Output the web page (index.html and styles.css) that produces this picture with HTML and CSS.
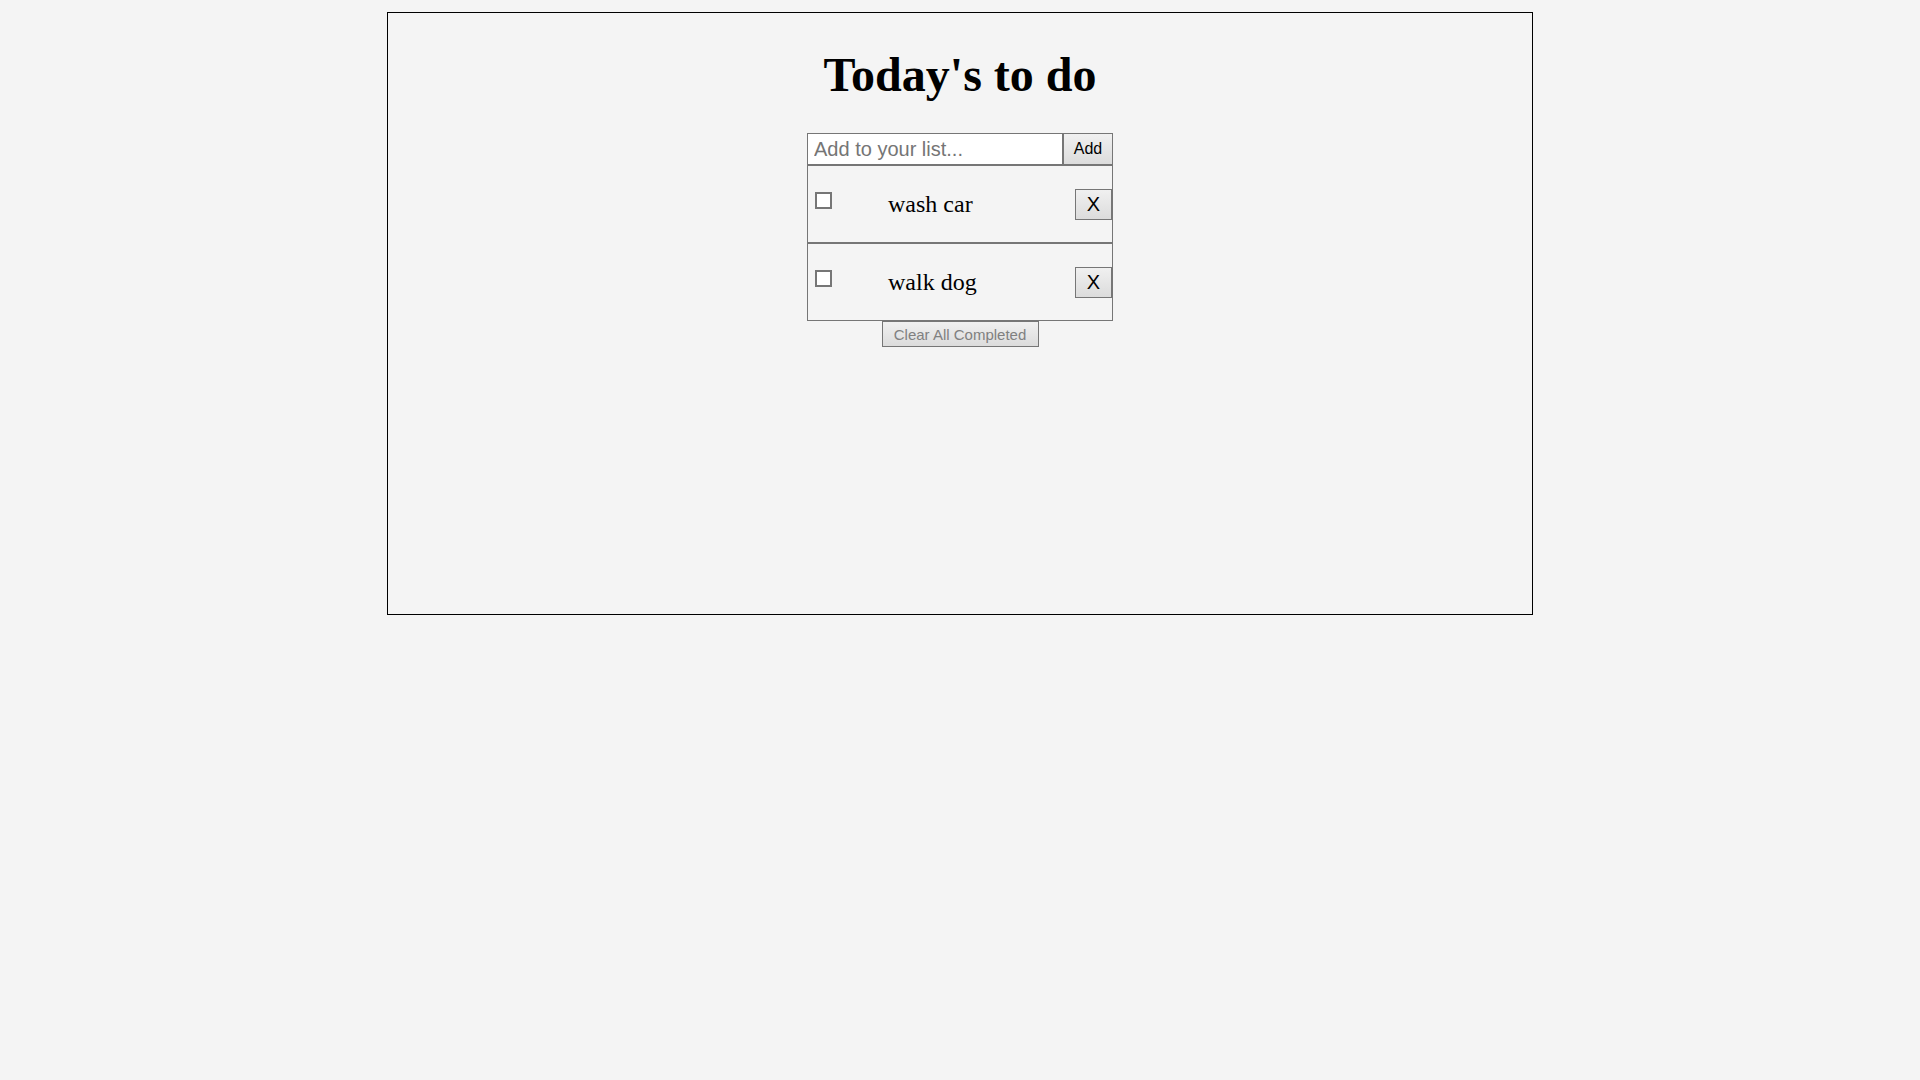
FILE: index.html
```html
<!DOCTYPE html>
<html>
<head>
<meta charset="utf-8">
<title>Today's to do</title>
<link rel="stylesheet" href="styles.css">
</head>
<body>
<div class="app">
  <h1 class="title">Today's to do</h1>
  <div class="todo">
    <form class="add-form" onsubmit="return false">
      <input class="add-input" type="text" placeholder="Add to your list...">
      <button class="add-btn" type="button">Add</button>
    </form>
    <ul class="list">
      <li class="item">
        <input class="check" type="checkbox">
        <span class="item-text">wash car</span>
        <button class="del-btn" type="button">X</button>
      </li>
      <li class="item">
        <input class="check" type="checkbox">
        <span class="item-text">walk dog</span>
        <button class="del-btn" type="button">X</button>
      </li>
    </ul>
    <div class="clear-row">
      <button class="clear-btn" type="button">Clear All Completed</button>
    </div>
  </div>
</div>
</body>
</html>
```

FILE: styles.css
```css
html, body {
  margin: 0;
  padding: 0;
  background: #f4f4f4;
}

body {
  font-family: "Liberation Serif", "Times New Roman", serif;
}

.app {
  width: 1144px;
  height: 601px;
  margin: 12px auto 0;
  border: 1px solid #000;
  background: #f4f4f4;
}

.title {
  margin: 34px 0 0;
  font-family: "Liberation Serif", "Times New Roman", serif;
  font-size: 48px;
  font-weight: bold;
  line-height: 56px;
  text-align: center;
  color: #000;
}

.todo {
  width: 306px;
  margin: 30px auto 0;
}

.add-form {
  display: flex;
  margin: 0;
}

.add-input {
  box-sizing: border-box;
  width: 256px;
  height: 32px;
  margin: 0;
  padding: 0 6px;
  border: 1px solid #767676;
  background: #fff;
  font-family: "Liberation Sans", Arial, sans-serif;
  font-size: 20px;
  color: #000;
  outline: none;
}

.add-input::placeholder {
  color: #757575;
}

.add-btn {
  box-sizing: border-box;
  width: 50px;
  height: 32px;
  margin: 0;
  padding: 0;
  border: 1px solid #767676;
  background: linear-gradient(#f0f0f0, #dcdcdc);
  font-family: "Liberation Sans", Arial, sans-serif;
  font-size: 16px;
  color: #000;
}

.list {
  list-style: none;
  margin: 0;
  padding: 0;
}

.item {
  box-sizing: border-box;
  height: 78px;
  display: flex;
  align-items: center;
  border: 1px solid #767676;
}

.check {
  appearance: none;
  -webkit-appearance: none;
  box-sizing: border-box;
  width: 17px;
  height: 17px;
  margin: 26px 0 0 7px;
  align-self: flex-start;
  border: 2px solid #767676;
  background: #fff;
}

.item-text {
  margin-left: 56px;
  font-family: "Liberation Serif", "Times New Roman", serif;
  font-size: 24px;
  color: #000;
}

.del-btn {
  box-sizing: border-box;
  width: 37px;
  height: 31px;
  margin: 0 0 0 auto;
  padding: 0;
  border: 1px solid #767676;
  background: linear-gradient(#f0f0f0, #dcdcdc);
  font-family: "Liberation Sans", Arial, sans-serif;
  font-size: 20px;
  color: #000;
}

.clear-row {
  display: flex;
  justify-content: center;
}

.clear-btn {
  box-sizing: border-box;
  width: 157px;
  height: 26px;
  margin: 0;
  padding: 0;
  border: 1px solid #767676;
  background: linear-gradient(#f0f0f0, #dcdcdc);
  font-family: "Liberation Sans", Arial, sans-serif;
  font-size: 15px;
  color: #808080;
}
```
